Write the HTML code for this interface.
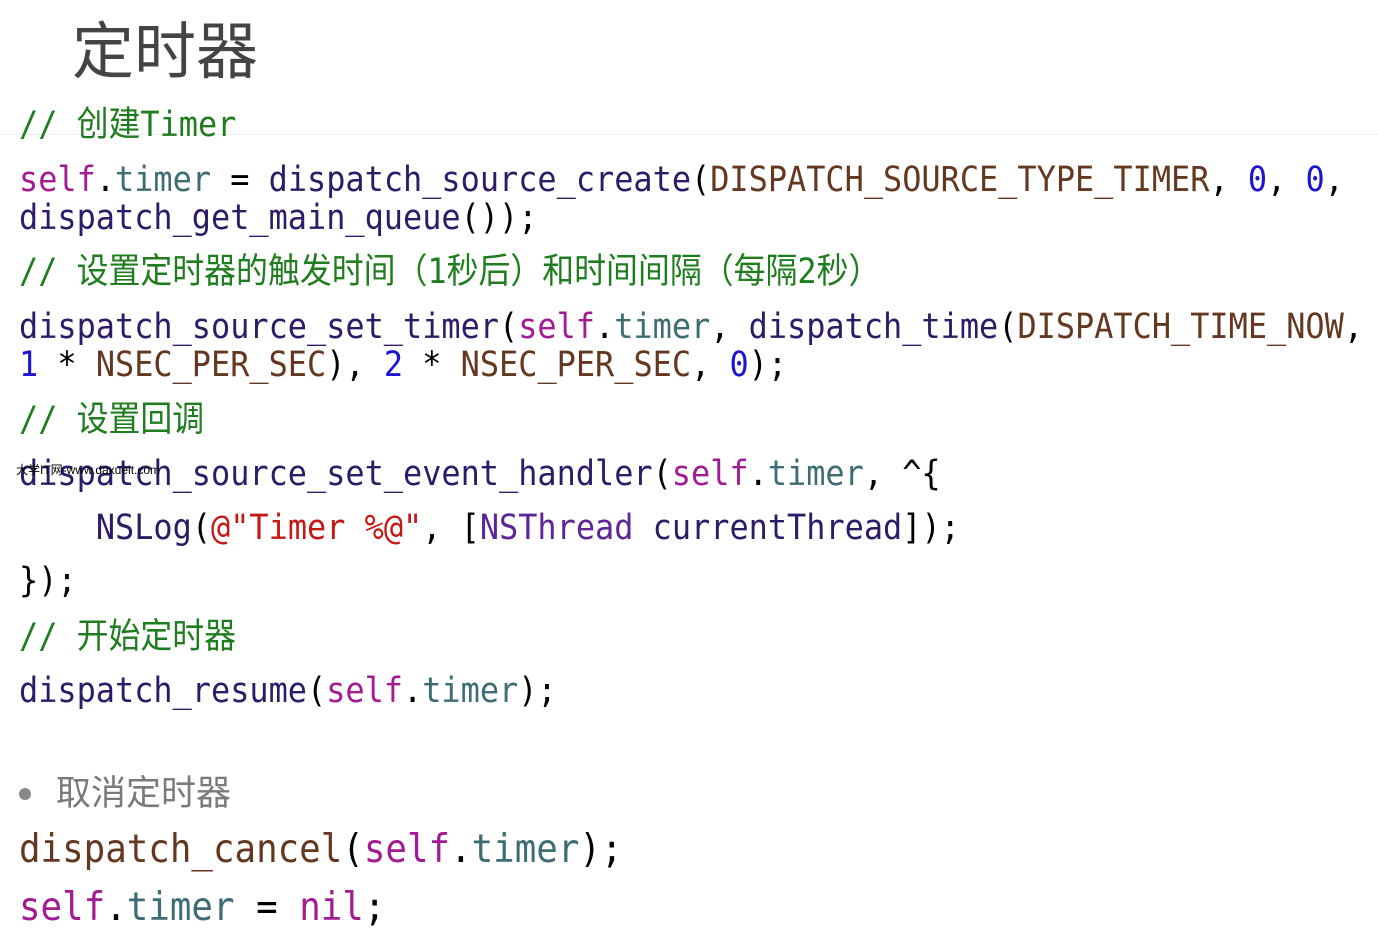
<!DOCTYPE html>
<html><head><meta charset="utf-8"><style>
body{margin:0;width:1378px;height:940px;background:#fff;position:relative;overflow:hidden}
.l{position:absolute;left:19px;white-space:pre;font-family:"DejaVu Sans Mono","Liberation Mono","Noto Sans CJK SC",monospace;font-size:31.9px;line-height:48px;margin-top:-4px;transform:scaleY(1.1);transform-origin:0 50%;color:#000}
.big{font-size:35.8px;line-height:52px}
.c{color:#1f7d1f;font-family:"DejaVu Sans Mono","Noto Sans CJK SC",monospace}
.s{color:#a21b92}.t{color:#3d6d72}.f{color:#2e1b67}.k{color:#643820}.n{color:#1c14cf}.r{color:#c41a16}.p{color:#5c2699}
.title{position:absolute;left:72px;top:6px;font-family:"Noto Sans CJK SC",sans-serif;font-size:62px;line-height:80px;color:#444}
.bul{position:absolute;left:19px;top:770px;font-family:"Liberation Sans","Noto Sans CJK SC",sans-serif;font-size:35px;line-height:48px;color:#7a7a7a}
.dot{position:absolute;left:19px;top:788px;width:12px;height:12px;border-radius:50%;background:#888}
.wm{position:absolute;left:16px;top:461px;font-family:"Liberation Sans","Noto Sans CJK SC",sans-serif;font-size:12px;color:#000}
.sep{position:absolute;left:0;top:134px;width:1378px;height:1px;background:#f0f0f0}
</style></head><body>
<div class="title">定时器</div>
<div class="sep"></div>
<div class="l c" style="top:104px">// 创建Timer</div>
<div class="l" style="top:159px"><span class="s">self</span>.<span class="t">timer</span> = <span class="f">dispatch_source_create</span>(<span class="k">DISPATCH_SOURCE_TYPE_TIMER</span>, <span class="n">0</span>, <span class="n">0</span>,</div>
<div class="l" style="top:197px"><span class="f">dispatch_get_main_queue</span>());</div>
<div class="l c" style="top:251px">// 设置定时器的触发时间（1秒后）和时间间隔（每隔2秒）</div>
<div class="l" style="top:306px"><span class="f">dispatch_source_set_timer</span>(<span class="s">self</span>.<span class="t">timer</span>, <span class="f">dispatch_time</span>(<span class="k">DISPATCH_TIME_NOW</span>,</div>
<div class="l" style="top:344px"><span class="n">1</span> * <span class="k">NSEC_PER_SEC</span>), <span class="n">2</span> * <span class="k">NSEC_PER_SEC</span>, <span class="n">0</span>);</div>
<div class="l c" style="top:399px">// 设置回调</div>
<div class="l" style="top:453px"><span class="f">dispatch_source_set_event_handler</span>(<span class="s">self</span>.<span class="t">timer</span>, ^{</div>
<div class="wm">大学IT网-www.daxueit.com</div>
<div class="l" style="top:507px">    <span class="f">NSLog</span>(<span class="r">@"Timer %@"</span>, [<span class="p">NSThread</span> <span class="f">currentThread</span>]);</div>
<div class="l" style="top:560px">});</div>
<div class="l c" style="top:616px">// 开始定时器</div>
<div class="l" style="top:670px"><span class="f">dispatch_resume</span>(<span class="s">self</span>.<span class="t">timer</span>);</div>
<div class="dot"></div>
<div class="bul" style="left:56px">取消定时器</div>
<div class="l big" style="top:828px"><span class="k">dispatch_cancel</span>(<span class="s">self</span>.<span class="t">timer</span>);</div>
<div class="l big" style="top:886px"><span class="s">self</span>.<span class="t">timer</span> = <span class="s">nil</span>;</div>
</body></html>
